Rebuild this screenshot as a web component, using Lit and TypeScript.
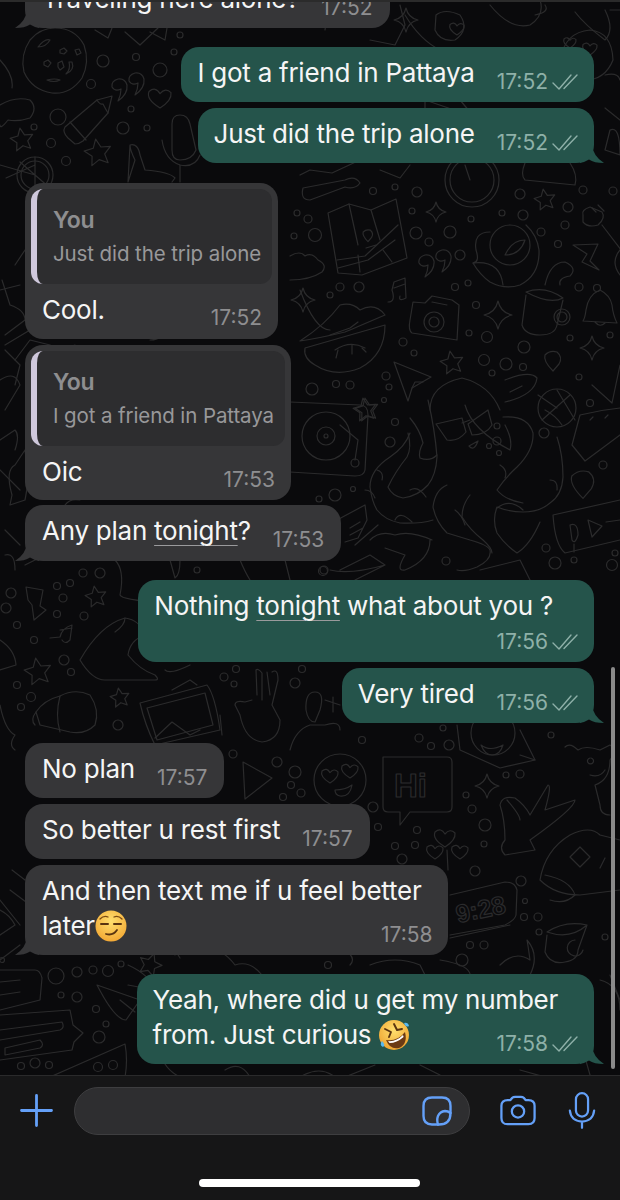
import { LitElement, html, css, svg } from "lit";
import { customElement } from "lit/decorators.js";

const circles: number[][] = [
[103,61,6],[91,84,4.5],[136,57,3.5],[174,52,3],[160,70,7],[180,35,3],[131,109,3],[123,128,6],[147,128,3],[58,117,8],[34,127,3],[51,143,4.5],[66,161,4.5],
[373,191,3.5],[395,187,3],[417,192,5],[297,213,3],[308,219,4],[315,235,6.5],[294,236,3],[412,211,3],[416,233,6],[429,242,4],[450,232,6],[460,255,5],[471,219,3],[502,213,3],[523,215,5],[520,194,5],[583,190,4],[613,191,4],[568,207,5],[565,225,4],[541,232,4],[558,244,3.5],[579,287,4],[340,287,4],[359,287,5],[330,295,3],[455,287,3.5],[468,283,3],[476,305,3.5],[469,333,3],[487,337,5.5],[403,342,4],[414,353,3],[484,360,5.5],[506,364,6],[492,373,3],[523,367,3.5],[524,347,6],[570,338,3],[610,335,3],[579,377,3],[386,376,4],[389,387,3],[312,389,6],[336,384,3.5],[350,385,4],[384,400,2.5],[590,403,3.5],
[395,422,3.5],[390,442,5],[335,495,6],[353,489,2.5],[319,499,3],[497,426,3],[497,441,4],[489,446,2.5],[499,453,2.5],[544,433,5],[603,465,4],[546,548,4],[555,563,6],[574,560,3],[612,565,5.5],[615,553,3],[446,561,4],[323,571,4.5],
[83,573,4],[100,573,5],[70,583,3.5],[57,586,3.5],[11,593,5],[6,608,5],[63,598,4],[57,614,3.5],[84,616,4],[17,625,3.5],[34,640,3.5],[64,660,5],[71,672,3.5],[17,685,3.5],[31,697,4.5],[21,707,3.5],[118,725,5],[197,570,3],[224,677,4],[236,669,3.5],[234,684,3],[302,669,3.5],[295,683,5],[324,570,4],
[233,754,4],[277,762,5],[295,772,6],[291,785,3.5],[301,793,4],[283,797,3.5],[362,740,3.5],[419,738,4],[431,746,3.5],[449,745,5],[443,728,3],[551,735,3],[506,775,3],[520,774,4],[466,795,3],[472,809,4],[485,825,6],[373,807,5],[378,827,3.5],[417,830,3.5],[395,846,3.5],[415,845,3.5],[402,859,5],[484,844,3],[475,871,5],[521,881,5],[525,901,2.5],[524,917,3.5],[538,917,4],[539,932,3],[605,937,3],[470,945,3.5],[484,945,4],[462,960,6],[328,965,3.5],
[56,976,8],[77,972,5],[93,970,4],[108,971,5.5],[121,964,3],[61,995,3],[77,997,5],[96,1009,3.5],[106,1024,3],[99,1037,6],[35,1063,5],[21,1066,3.5],[49,1065,3.5],[98,1067,4.5],[113,1065,4.5],[2,960,2.5],
[472,180,27],[472,180,22],[510,245,20],[434,322,10],[434,322,5],[326,436,24],[326,436,9],[326,436,2],[355,463,4],[493,733,22],[340,780,26],[557,408,19],[562,317,8],[562,317,5],[35,175,18],[35,175,14],[597,288,3.5],
];

function star(cx: number, cy: number, r: number, rot = -10) {
  let d = "";
  for (let i = 0; i < 10; i++) {
    const a = ((rot - 90 + i * 36) * Math.PI) / 180;
    const q = i % 2 ? r * 0.48 : r;
    d += `${i ? "L" : "M"}${(cx + q * Math.cos(a)).toFixed(1)} ${(cy + q * Math.sin(a)).toFixed(1)} `;
  }
  return d + "Z";
}
function sparkle(cx: number, cy: number, r: number) {
  const s = r * 0.18;
  return `M${cx} ${cy - r}Q${cx + s} ${cy - s} ${cx + r} ${cy}Q${cx + s} ${cy + s} ${cx} ${cy + r}Q${cx - s} ${cy + s} ${cx - r} ${cy}Q${cx - s} ${cy - s} ${cx} ${cy - r}Z`;
}
function heart(x: number, y: number, s: number) {
  return `M${x} ${y + s}Q${x - s * 1.3} ${y + s * 0.2} ${x - s} ${y - s * 0.5}Q${x - s * 0.4} ${y - s} ${x} ${y - s * 0.3}Q${x + s * 0.5} ${y - s * 0.9} ${x + s} ${y - s * 0.4}Q${x + s * 1.1} ${y + s * 0.3} ${x} ${y + s}Z`;
}
function pin(x: number, y: number, s: number) {
  return `M${x} ${y + s * 1.1}Q${x - s} ${y + s * 0.1} ${x - s * 0.8} ${y - s * 0.5}Q${x - s * 0.3} ${y - s} ${x + s * 0.4} ${y - s * 0.8}Q${x + s} ${y - s * 0.3} ${x + s * 0.6} ${y + s * 0.4}Z`;
}
function comma(x: number, y: number) {
  return `M${x} ${y + 15}Q${x + 10} ${y + 8} ${x + 9} ${y - 1}Q${x + 7} ${y - 8} ${x} ${y - 7}Q${x - 7} ${y - 5} ${x - 6} ${y + 1}Q${x - 3} ${y + 6} ${x + 3} ${y + 3}Q${x + 3} ${y + 9} ${x} ${y + 15}Z`;
}

const paths: string[] = [
// cookie
"M30 40Q40 28 55 28Q75 28 84 45Q90 62 82 78Q70 95 52 93Q32 90 24 72Q20 55 30 40Z","M38 47Q45 38 50 40Q46 47 38 47Z","M60 50l4-2 3 3-3 3-4-1Z","M44 62l4-2 3 3-3 4-4-2Z","M58 63l4-2 2 6-4 3-2-3Z","M72 62q3 8-6 12q5-5 3-12Z","M47 80q8-2 13 0q-6 3-13 0Z","M75 50l4-1 2 4-4 2Z",
// left blobs
"M0 105Q15 96 30 100Q38 108 30 118Q18 122 8 120Q0 130 0 125","M0 60Q14 75 12 88",
// pencil
"M112 96L97 100L65 127Q62 132 68 138L75 144Q79 144 83 141L108 113Z","M70 122L86 140","M97 100Q100 105 103 104Q105 108 108 113",
comma(118,86),comma(135,80),heart(160,97,11),
star(22,140,12),star(98,153,14),
"M172 124Q172 115 180 115Q188 115 190 124L196 150Q192 160 180 160Q172 160 172 150Z","M162 140Q165 160 180 165Q195 168 200 155","M180 165L180 182",
"M130 145Q138 143 140 155L145 170Q170 172 175 178L172 182M128 182L135 160Q130 150 130 145Z",
"M125 32L140 45L158 28","M150 32L165 40L167 28","M95 30L108 38L112 28",
"M6 178L35 165M0 165L35 175M35 157L35 193M20 162L50 188",
// top right
"M360 5L375 20L385 0","M325 30Q325 20 335 15M400 5L405 25L395 45L370 40","M405 15Q420 40 440 50",sparkle(406,20,12),
"M436 15Q445 8 460 15Q470 30 455 40Q440 42 435 30Z",heart(457,28,7),"M490 5Q510 30 530 25Q545 15 540 0","M535 15Q550 12 545 5",
"M575 12Q585 25 605 40Q615 30 605 10","M610 10L620 10",heart(590,48,7),heart(570,42,6),"M560 60Q565 32 590 30Q612 32 613 60Q605 80 585 80Q565 78 560 60Z",
"M605 75Q618 72 620 80",
"M425 100L460 112L470 112L470 130L450 135L425 125Z","M460 100L470 112","M610 130Q620 125 620 155L605 150Z","M620 120L605 108",
// under sent
"M300 175L310 170L332 173L360 160M303 188L345 180Q355 175 360 183Q355 190 345 187L310 200Q300 200 303 188Z",
"M465 165L470 180","M525 163Q520 175 525 180L575 185Q578 175 570 163",
"M380 170L400 178L410 165",
// map
"M328 213L349 204L371 210L396 199L407 258L362 275L338 273Z","M349 204L358 245","M358 255L360 272","M371 210L380 240","M337 260L365 256L398 225","M338 268L368 260L395 240","M383 250L392 262","M366 248L376 245",pin(368,235,6),
"M290 256Q300 250 305 256Q312 252 318 260Q328 265 322 272Q310 280 290 280",
comma(425,262),comma(442,257),
sparkle(436,212,10),sparkle(303,300,12),sparkle(498,315,14),sparkle(592,348,12),
star(545,200,11),star(452,363,12),star(367,410,12),
"M490 232Q473 232 476 250Q480 262 473 263Q480 275 490 282Q505 290 520 285Q540 275 539 250Q537 235 526 225","M473 263Q500 260 503 285","M505 255Q512 240 525 240Q520 255 505 255Z",
"M583 215Q581 210 590 207L602 212Q606 218 598 225Q588 228 583 222Z","M602 225L625 255","M598 205l6 6M592 208l4 4",
"M573 245L598 244L590 261L599 270L582 262L587 254Z",
"M545 285Q550 262 565 262Q578 268 570 276Q558 278 560 285",
"M620 250Q610 262 620 275",
// mug
"M526 295L522 325Q525 335 540 335Q555 335 557 325L563 300","M526 292Q545 285 563 298Q550 305 526 292Z",
"M600 290Q588 295 586 310Q585 318 583 321L617 323Q613 315 612 305Q610 295 600 290Z","M595 322Q600 328 605 323",
// lips
"M300 341Q325 325 340 305Q352 302 360 310Q375 302 385 315Q350 330 345 332Q320 338 300 341Z","M305 348Q340 338 385 325Q385 355 360 368Q335 378 315 365Q303 358 305 348Z","M330 335L350 328L358 322M335 350Q350 340 365 348","M338 350L336 358M352 345L352 354M362 348L366 352",
// camera
"M413 302L425 303L432 296L452 300L459 305L457 340L412 333Q408 330 410 320Z","M432 302L447 305",
// note
"M388 302Q396 302 392 290L394 282L405 278L406 298Q398 302 400 296M394 288L405 284",
pin(553,360,10),pin(583,483,14),
"M394 362L431 377L412 388L408 401Z","M412 388L415 382L423 382",
"M538 395L557 408M557 390L575 420M542 420L570 395","M545 410Q555 415 562 425",
"M592 385L612 403L620 365",
"M290 402L360 405Q368 405 368 415L365 470Q364 476 355 476L290 472","M340 425L358 440L355 460",star(365,410,12),
// centre bowl
"M430 410Q430 385 462 378Q490 385 500 410","M505 380Q530 370 537 378Q535 395 505 402","M510 392l12-6",
"M436 424L462 418L466 432Q458 442 447 440Z","M468 424L488 410L492 425Q486 435 472 435Z","M462 423L470 420","M469 446L478 441Q474 452 469 446Z",
// octopus
"M410 433Q405 447 390 457Q370 470 370 487Q372 502 377 510Q385 520 400 523Q420 524 433 520",
"M408 433Q412 448 407 457Q395 472 388 487Q392 496 403 498Q418 496 428 485Q436 475 437 457Q435 430 428 400",
"M410 418Q420 430 423 443Q418 452 420 458Q430 462 437 455",
"M447 485Q435 490 433 507Q436 522 447 533L470 540Q488 545 490 550Q492 560 477 567Q465 572 457 570",
"M470 495Q462 505 462 517Q470 530 483 540Q492 548 492 553",
"M503 417Q528 415 533 433Q534 450 517 467Q505 478 497 490Q505 500 523 503",
"M557 437Q563 455 563 477Q562 495 550 503Q540 512 523 512Q510 512 497 507Q492 520 497 533Q505 545 517 553Q530 545 540 522",
"M465 405Q472 430 510 450Q513 440 505 425",
"M370 540Q380 530 395 535Q410 530 432 540M430 540Q430 560 405 570Q395 572 405 555L385 548",
"M377 470Q384 472 382 480M365 490Q372 490 375 498M395 520Q400 510 412 522M410 490Q418 485 426 497M500 465Q508 470 505 478M497 508Q510 498 523 510M550 480Q558 480 557 490M455 510Q462 515 465 525",
// video card, shoe, ticket
"M553 515L620 500M553 515Q555 545 565 553L620 540","M570 525Q578 522 578 535Q575 545 572 540Z","M574 544L574 552M588 520L602 526L592 537Z","M606 522L620 520",
"M572 445L580 415Q600 410 620 408M572 445L585 461L620 435","M590 420l3-3M605 418l3-3",
"M337 520L365 505L367 520L358 538L345 542M350 535L363 528M350 528L360 522M355 545L378 525",
// picks under
"M340 570L370 555L385 565L355 580M330 570Q350 575 385 565M480 570L520 560L530 580",
// left mid
"M26 587L43 590L40 606L46 610L34 620L32 605L28 600Z",
"M50 638L60 637Q62 628 72 625L70 640Q65 645 62 640M60 630L72 628",
star(38,672,14),star(96,597,11),star(120,698,10),
"M80 660Q100 625 125 618Q140 620 145 635Q130 640 128 655Q140 670 155 675Q160 680 155 680L105 680Q92 680 80 660Z","M115 632Q125 625 125 618","M190 665Q170 675 165 670",
"M0 640Q15 650 16 665L0 670",
"M36 712Q44 700 60 696Q75 688 90 695Q100 710 95 725Q85 735 70 732L40 725Z","M36 712Q30 720 35 725M60 696Q55 715 60 732",
"M0 705Q5 730 15 735Q8 745 15 750",
"M140 703L207 685Q215 695 220 730L155 745Q145 725 140 703Z","M147 708L205 693L213 725L157 740Z","M155 738L172 722L190 735L200 730",
"M172 690L190 680L197 685","M220 715L222 735",
"M256 670L257 695M267 672L270 695M256 670Q258 668 262 673L262 700M272 672Q278 668 278 680L272 705L280 720Q280 740 262 742Q245 740 240 715L235 705Q235 700 245 702L252 700",
"M306 710Q305 692 315 692Q325 692 320 710L315 722Q308 722 306 710Z","M290 750Q295 730 310 725L325 725Q340 720 340 730",
"M325 700L340 705M333 697L333 712",
// hi
"M383 757L447 757Q452 757 452 762L452 807Q452 812 447 812L410 812L400 825L400 812L388 812Q383 812 383 807Z",
"M243 762L272 778L245 799Z",
heart(330,775,8),heart(350,770,8),"M335 790Q345 790 352 785Q350 797 340 796Q335 795 335 790Z",
"M457 725L460 750L500 768L535 760L520 730","M520 755L535 760","M481 745Q490 752 503 745Q500 755 492 755Q485 755 481 745Z",
heart(445,837,10),heart(435,851,8),heart(460,851,8),"M447 850L448 870",
"M500 805Q502 795 515 798Q525 805 530 815L548 785Q552 785 545 810L575 800Q575 808 530 840L535 850L505 855Q498 848 505 840Q505 820 500 805Z","M507 800Q520 815 520 820",
sparkle(487,786,12),
"M565 747Q570 742 578 750Q585 745 600 750L610 745Q618 750 610 760Q610 780 595 785L600 805Q600 815 610 815",
"M590 758a3 3 0 1 0 1 0M590 775Q600 778 605 770",
"M540 880Q545 850 570 835Q590 825 600 835L620 840M540 880Q555 895 580 895L620 890","M575 852l5-5 5 5 5 5-5 5-5 5-5-5-5-5Z","M600 868l5-10",
// clock
"M450 895L505 882Q515 882 517 890L516 915Q515 920 505 925L450 935","M450 938L510 925",
// mug lower, shell etc
"M547 935L545 952Q550 965 565 962Q578 960 578 950L587 925M547 932Q565 920 587 925Q570 940 547 932Z",
"M575 940a8 8 0 1 0 8 10","M545 875Q570 880 575 895Q565 905 550 900",
"M500 965Q515 950 530 960Q528 945 527 940Q540 955 530 975",
"M370 965Q395 955 420 965L425 975","M180 958Q170 945 200 950Q220 945 235 965Q250 960 262 975",
"M128 965Q150 975 155 990L128 985",star(150,965,12,20),
// bottom left
"M0 970L35 970Q40 970 42 978L40 1000L0 1010","M0 982L20 980M0 995L20 992",
"M0 1015L70 1010L73 1025L83 1033L74 1042L72 1050L0 1060","M0 1030L62 1022Q65 1028 60 1030L0 1040M5 1048L40 1040Q45 1045 40 1048L5 1055Z",
"M97 985L140 1000L126 1020Q115 1020 97 985Z","M120 1000L135 1012",
"M50 1077L125 1044Q128 1060 125 1077","M0 910Q10 915 15 925L0 935M0 960L20 945",
"M0 900L20 925M10 890L30 905M25 880L12 870",
"M580 1040L590 1075M610 975L620 1000","M165 1064Q170 1072 180 1077M420 1065L440 1075M520 1070L545 1077",
"M225 1070Q240 1060 250 1077M300 1077Q320 1065 335 1077M345 1077L375 1065",
"M600 980Q620 985 620 1010","M150 945Q170 945 175 955M330 942Q360 955 350 965M440 960Q470 965 470 975",
"M65 380Q85 365 75 345L60 350","M0 380Q15 370 20 385L5 410","M0 440L15 430Q20 435 15 450","M60 250Q45 240 30 255L30 275M15 265L25 250",
"M2 280L10 305Q25 310 25 320L5 335","M20 285L0 290","M30 330L5 345M5 350L20 365L15 385",
"M80 240Q90 225 85 215M100 220L130 200L140 195","M140 300Q165 290 175 305L170 320Q165 340 150 340",
"M300 290Q315 330 330 330","M15 360L30 340L50 345Q62 355 50 360L30 375","M12 495Q5 470 15 465L25 450Q30 480 25 500L10 505Z","M0 470L20 490",
"M30 520L60 510L75 540L55 545Z","M5 530L20 545M65 505Q70 498 80 500","M25 565L45 555Q50 545 60 560","M5 555Q15 552 15 570",
"M115 560Q125 570 120 595Q122 600 160 602Q175 590 170 585","M170 560L175 578Q180 575 180 560","M240 560Q245 572 250 580","M285 560L290 580",
];

const hi = svg`<text x="394" y="797" class="doodle-text" font-size="33">Hi</text><text x="458" y="923" class="doodle-text" font-size="25" transform="rotate(-12 458 923)">9:28</text>`;

@customElement("app-root")
export class AppRoot extends LitElement {
  static styles = css`
    :host { display: block; width: 620px; height: 1200px; background: #161617; overflow: hidden; font-family: Inter, "Liberation Sans", sans-serif; position: relative; color: #f5f5f5; }
    .chat { height: 1076px; position: relative; overflow: hidden; background: #0a0a0c; display: flex; flex-direction: column; justify-content: flex-end; padding: 0 26px 11px 25px; box-sizing: border-box; border-bottom: 1px solid #2a2a2b; }
    .doodles { position: absolute; left: 0; top: 0; width: 620px; height: 1076px; }
    .doodles * { fill: none; stroke: #2b2b2c; stroke-width: 1.2; stroke-linejoin: round; stroke-linecap: round; }
    .doodle-text { font-family: "Liberation Sans", sans-serif; font-weight: 700; }
    .topline { position: absolute; left: 0; right: 0; top: 0; height: 2px; background: #2b2b2b; z-index: 2; }
    .scrollbar { position: absolute; left: 611px; top: 667px; width: 4px; height: 402px; border-radius: 2px; background: #8a8a8a; z-index: 2; }
    .b { position: relative; flex: none; border-radius: 18px; box-sizing: border-box; font-size: 26px; line-height: 35px; letter-spacing: -0.25px; }
    .in { background: #363638; align-self: flex-start; }
    .out { background: #25544b; align-self: flex-end; }
    .row { display: flex; align-items: flex-end; gap: 22px; padding: 8px 16px 10px 17px; }
    .row > span:first-child { margin-bottom: 2px; }
    .out .row { padding-left: 16px; }
    .row.tall { padding-bottom: 11px; }
    .stack { display: flex; flex-direction: column; padding: 8px 16px 10px 16px; }
    .stack > span:first-child { margin-bottom: 2px; }
    .in .stack { padding-left: 17px; }
    .gap-xs { margin-top: 5px; }
    .gap-s { margin-top: 6px; }
    .gap-l { margin-top: 19px; }
    .gap-xl { margin-top: 20px; }
    .time { font-size: 21px; line-height: 20px; color: #8e8e90; letter-spacing: 0; display: flex; align-items: center; gap: 4px; flex: none; white-space: nowrap; }
    .in .row .time { margin-right: 1px; }
    .out .time { color: #8eb0a8; }
    .stack .time { align-self: flex-end; }
    .overlap { margin-top: -20px; }
    .below { margin-top: 7px; }
    .wide { padding-right: 25px; }
    .wide2 { padding-right: 20px; }
    .wide3 { padding-right: 11px; }
    .check { width: 26px; height: 18px; display: block; }
    .u { text-decoration: underline; text-decoration-color: #9a9a9c; text-decoration-thickness: 1px; text-underline-offset: 5px; }
    .tail { position: absolute; bottom: 0; width: 24px; height: 18px; display: block; }
    .tail.r { right: -10px; fill: #25544b; }
    .tail.l { left: -10px; fill: #363638; }
    .quoted { padding: 6px 6px 10px 6px; }
    .quoted.first { padding-bottom: 11px; }
    .quote { position: relative; background: #2d2d2f; border-radius: 12px; overflow: hidden; height: 95px; box-sizing: border-box; padding: 18px 11px 0 16px; border-left: 6px solid #cfc8dc; }
    .who { font-size: 23px; line-height: 26px; font-weight: 600; color: #8e8e90; letter-spacing: -0.3px; }
    .qt { font-size: 20.5px; line-height: 26px; margin-top: 8px; color: #98989a; letter-spacing: -0.1px; white-space: nowrap; }
    .qrow { display: flex; justify-content: space-between; align-items: flex-end; padding: 8px 10px 0 11px; }
    .qrow > span:first-child { margin-bottom: 1px; }
    .emoji { display: inline-block; vertical-align: -7px; width: 32px; height: 32px; }
    .bar { height: 123px; position: relative; display: flex; align-items: flex-start; padding: 11px 0 0 20px; box-sizing: border-box; background: #161617; }
    .plus { width: 33px; height: 33px; margin-top: 7px; flex: none; }
    .input { width: 396px; height: 48px; margin-left: 21px; background: #2e2e30; border: 1px solid #3e3e40; border-radius: 24px; box-sizing: border-box; flex: none; display: flex; align-items: center; justify-content: flex-end; padding-right: 17px; }
    .ic { display: block; fill: none; stroke: #64a0f8; stroke-width: 2.4; stroke-linecap: round; stroke-linejoin: round; flex: none; }
    .cam { width: 36px; height: 31px; margin: 8px 0 0 30px; }
    .mic { width: 28px; height: 39px; margin: 4px 0 0 32px; }
    .home { position: absolute; left: 199px; top: 103px; width: 221px; height: 8px; border-radius: 4px; background: #fff; }
  `;

  private check() {
    return html`<svg class="check" viewBox="0 0 26 18"><g fill="none" stroke="currentColor" stroke-width="1.4" stroke-linecap="round" stroke-linejoin="round"><path d="M1 10l6 6L19 2"/><path d="M12 15.5L25 2"/></g></svg>`;
  }
  private tailR() {
    return html`<svg class="tail r" viewBox="0 0 24 18"><path d="M12 0Q13 11 24 18Q14 18 9 14.5Q5 17 0 18L0 0Z"/></svg>`;
  }
  private tailL() {
    return html`<svg class="tail l" viewBox="0 0 24 18"><path d="M12 0Q11 11 0 18Q10 18 15 14.5Q19 17 24 18L24 0Z"/></svg>`;
  }
  private time(t: string, read = false) {
    return html`<span class="time">${t}${read ? this.check() : ""}</span>`;
  }
  private smirk() {
    return html`<svg class="emoji" viewBox="0 0 32 32" aria-hidden="true"><defs><radialGradient id="fa" cx="50%" cy="35%" r="70%"><stop offset="0" stop-color="#ffdf6e"/><stop offset="1" stop-color="#f2a531"/></radialGradient></defs><circle cx="16" cy="16" r="15.5" fill="url(#fa)"/><path d="M5 9q4-4 8-2M19 7q4-2 8 2" fill="none" stroke="#7a4a12" stroke-width="1.3" stroke-linecap="round"/><path d="M6 14h7M19 14h7" fill="none" stroke="#5a3410" stroke-width="2" stroke-linecap="round"/><path d="M11 24q7 2 11-4" fill="none" stroke="#5a3410" stroke-width="1.8" stroke-linecap="round"/></svg>`;
  }
  private rofl() {
    return html`<svg class="emoji" viewBox="0 0 32 32" aria-hidden="true"><defs><radialGradient id="fb" cx="50%" cy="35%" r="70%"><stop offset="0" stop-color="#ffdf6e"/><stop offset="1" stop-color="#eda02d"/></radialGradient></defs><circle cx="16" cy="16" r="15" fill="url(#fb)"/><path d="M7 10l6 3-2 5M16 5l3 6 5-1" fill="none" stroke="#5a3410" stroke-width="1.9" stroke-linecap="round" stroke-linejoin="round"/><path d="M8 21q11 2 19-8q3 12-6 16q-9 2-13-8Z" fill="#6b3a14"/><path d="M10 22q8 1 15-6l.6 2q-7 6-14 6Z" fill="#fff"/><path d="M4 22q-3 4 1 6 3-2-1-6ZM26 4q4-1 5 3-3 2-5-3Z" fill="#58b8ef"/></svg>`;
  }

  render() {
    return html`
      <div class="chat">
        <svg class="doodles" viewBox="0 0 620 1076" aria-hidden="true">
          ${circles.map((c) => svg`<circle cx=${c[0]} cy=${c[1]} r=${c[2]}></circle>`)}
          ${paths.map((d) => svg`<path d=${d}></path>`)}
          ${hi}
        </svg>
        <div class="topline"></div>

        <div class="b in"><div class="row"><span>Traveling here alone?</span>${this.time("17:52")}</div>${this.tailL()}</div>

        <div class="b out gap-l"><div class="row"><span>I got a friend in Pattaya</span>${this.time("17:52", true)}</div></div>
        <div class="b out gap-s"><div class="row"><span>Just did the trip alone</span>${this.time("17:52", true)}</div>${this.tailR()}</div>

        <div class="b in quoted first gap-xl">
          <div class="quote"><div class="who">You</div><div class="qt">Just did the trip alone</div></div>
          <div class="qrow"><span>Cool.</span>${this.time("17:52")}</div>
        </div>
        <div class="b in quoted gap-s">
          <div class="quote"><div class="who">You</div><div class="qt">I got a friend in Pattaya</div></div>
          <div class="qrow"><span>Oic</span>${this.time("17:53")}</div>
        </div>
        <div class="b in gap-xs"><div class="row tall"><span>Any plan <span class="u">tonight</span>?</span>${this.time("17:53")}</div>${this.tailL()}</div>

        <div class="b out gap-l"><div class="stack"><span class="wide">Nothing <span class="u">tonight</span> what about you ?</span><div class="time below">17:56${this.check()}</div></div></div>
        <div class="b out gap-s"><div class="row"><span>Very tired</span>${this.time("17:56", true)}</div>${this.tailR()}</div>

        <div class="b in gap-xl"><div class="row"><span>No plan</span>${this.time("17:57")}</div></div>
        <div class="b in gap-s"><div class="row"><span>So better u rest first</span>${this.time("17:57")}</div></div>
        <div class="b in gap-s"><div class="stack"><span class="wide3">And then text me if u feel better<br />later${this.smirk()}</span><div class="time overlap">17:58</div></div>${this.tailL()}</div>

        <div class="b out gap-l"><div class="stack"><span class="wide2">Yeah, where did u get my number<br />from. Just curious ${this.rofl()}</span><div class="time overlap">17:58${this.check()}</div></div>${this.tailR()}</div>

        <div class="scrollbar"></div>
      </div>
      <div class="bar">
        <svg class="ic plus" viewBox="0 0 33 33"><path d="M16.5 1.5v30M1.5 16.5h30" stroke-width="2.8"/></svg>
        <div class="input">
          <svg class="ic" width="30" height="30" viewBox="0 0 30 30"><path d="M17 28.5H10Q1.5 28.5 1.5 20V10Q1.5 1.5 10 1.5H20Q28.5 1.5 28.5 10V17Q28.5 28.5 17 28.5Z"/><path d="M16 28.5Q14.5 24 16 20Q18 15.5 23 15Q26 15 28.5 17"/></svg>
        </div>
        <svg class="ic cam" viewBox="0 0 38 32"><path d="M8 5H11L13 2.5Q14 1.5 16 1.5H22Q24 1.5 25 2.5L27 5H30Q36.5 5 36.5 11V24Q36.5 30.5 30 30.5H8Q1.5 30.5 1.5 24V11Q1.5 5 8 5Z"/><circle cx="19" cy="17" r="6.5"/></svg>
        <svg class="ic mic" viewBox="0 0 30 40"><rect x="8.5" y="1.5" width="13" height="25" rx="6.5"/><path d="M2 20Q3 31 15 32Q27 31 28 20M15 32V38.5"/></svg>
        <div class="home"></div>
      </div>
    `;
  }
}
